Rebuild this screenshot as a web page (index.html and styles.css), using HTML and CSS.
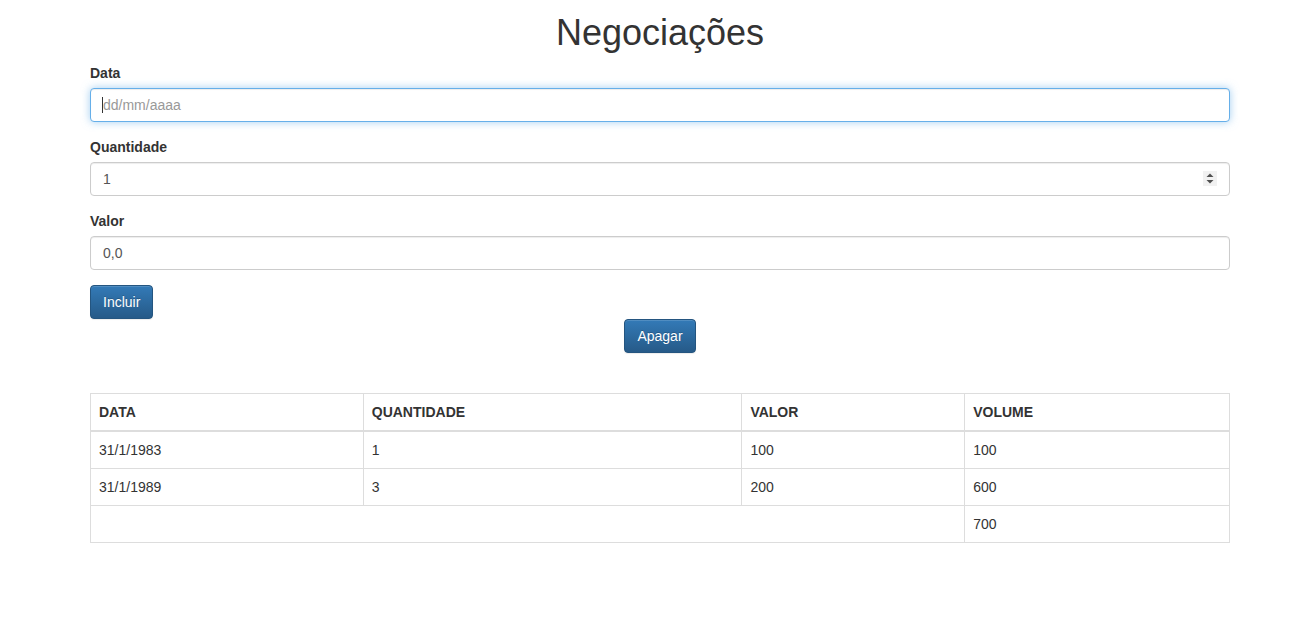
FILE: index.html
```html
<!DOCTYPE html>
<html lang="pt">
<head>
<meta charset="utf-8">
<title>Negociações</title>
<link rel="stylesheet" href="styles.css">
</head>
<body>
<div class="container">
  <h1 class="title">Negociações</h1>
  <form class="form">
    <div class="form-group">
      <label for="data">Data</label>
      <div class="field">
        <input type="text" id="data" class="form-control is-focused" placeholder="dd/mm/aaaa">
        <span class="caret-mark"></span>
      </div>
    </div>
    <div class="form-group">
      <label for="quantidade">Quantidade</label>
      <div class="field">
        <input type="number" id="quantidade" class="form-control" value="1" min="1" step="1">
        <span class="spinner">
          <svg width="14" height="15" viewBox="0 0 14 15" aria-hidden="true">
            <path d="M3.5 6 L7 2.5 L10.5 6 Z" fill="#505050"/>
            <path d="M3.5 9 L7 12.5 L10.5 9 Z" fill="#505050"/>
          </svg>
        </span>
      </div>
    </div>
    <div class="form-group">
      <label for="valor">Valor</label>
      <input type="text" id="valor" class="form-control" value="0,0">
    </div>
    <button type="button" class="btn btn-primary">Incluir</button>
  </form>
  <div class="center">
    <button type="button" class="btn btn-primary">Apagar</button>
  </div>
  <table class="table">
    <colgroup>
      <col class="c-data">
      <col class="c-qtd">
      <col class="c-valor">
      <col class="c-vol">
    </colgroup>
    <thead>
      <tr><th>DATA</th><th>QUANTIDADE</th><th>VALOR</th><th>VOLUME</th></tr>
    </thead>
    <tbody>
      <tr><td>31/1/1983</td><td>1</td><td>100</td><td>100</td></tr>
      <tr><td>31/1/1989</td><td>3</td><td>200</td><td>600</td></tr>
    </tbody>
    <tfoot>
      <tr><td colspan="3"></td><td>700</td></tr>
    </tfoot>
  </table>
</div>
</body>
</html>
```
FILE: styles.css
```css
* { box-sizing: border-box; }
html, body { margin: 0; padding: 0; }
body {
  font-family: "Liberation Sans", Arial, Helvetica, sans-serif;
  font-size: 14px;
  line-height: 1.42857143;
  color: #333;
  background: #fff;
}
.container {
  width: 1140px;
  margin-left: 90px;
}
.title {
  margin: 13px 0 10px;
  font-size: 36px;
  font-weight: 500;
  line-height: 1.1;
  text-align: center;
  color: #333;
}
.form { margin: 0; }
.form-group { margin-bottom: 15px; }
label {
  display: inline-block;
  margin-bottom: 5px;
  font-weight: 700;
}
.field { position: relative; }
.form-control {
  display: block;
  width: 100%;
  height: 34px;
  padding: 6px 12px;
  font-family: inherit;
  font-size: 14px;
  line-height: 1.42857143;
  color: #555;
  background: #fff;
  border: 1px solid #ccc;
  border-radius: 4px;
  box-shadow: inset 0 1px 1px rgba(0,0,0,.075);
  outline: none;
  -moz-appearance: textfield;
}
.form-control::-webkit-inner-spin-button,
.form-control::-webkit-outer-spin-button {
  -webkit-appearance: none;
  margin: 0;
}
.form-control::placeholder { color: #999; opacity: 1; }
.form-control.is-focused,
.form-control:focus {
  border-color: #66afe9;
  box-shadow: inset 0 1px 1px rgba(0,0,0,.075), 0 0 8px rgba(102,175,233,.6);
}
.caret-mark {
  position: absolute;
  left: 12px;
  top: 9px;
  width: 1px;
  height: 16px;
  background: #333;
}
.spinner {
  position: absolute;
  right: 13px;
  top: 9px;
  width: 14px;
  height: 15px;
  background: #f1f1f1;
  display: flex;
}
.btn {
  display: inline-block;
  height: 34px;
  padding: 6px 12px;
  font-family: inherit;
  font-size: 14px;
  line-height: 1.42857143;
  border-radius: 4px;
  border: 1px solid transparent;
  cursor: pointer;
}
.btn-primary {
  color: #fff;
  background-color: #265a88;
  background-image: linear-gradient(to bottom, #337ab7 0, #265a88 100%);
  border-color: #245580;
  text-shadow: 0 -1px 0 rgba(0,0,0,.2);
  box-shadow: inset 0 1px 0 rgba(255,255,255,.15), 0 1px 1px rgba(0,0,0,.075);
}
.center { text-align: center; }
.table {
  width: 100%;
  margin-top: 40px;
  border-collapse: collapse;
  border: 1px solid #ddd;
}
.c-data { width: 273px; }
.c-qtd { width: 379px; }
.c-valor { width: 223px; }
.c-vol { width: 265px; }
.table th,
.table td {
  padding: 8px;
  line-height: 1.42857143;
  text-align: left;
  vertical-align: top;
  border: 1px solid #ddd;
}
.table th {
  vertical-align: bottom;
  font-weight: 700;
  border-bottom-width: 2px;
}
```
